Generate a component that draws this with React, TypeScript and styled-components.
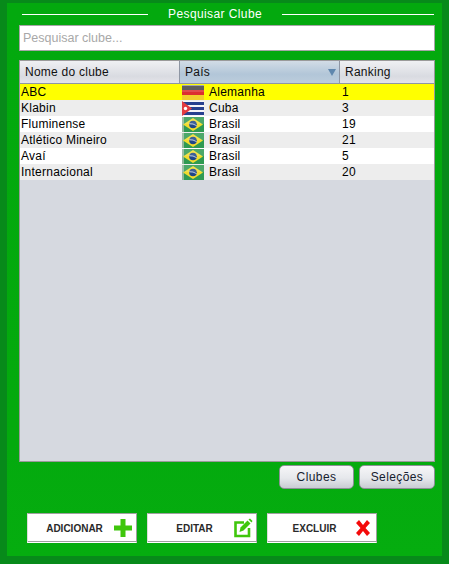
import styled, { createGlobalStyle } from "styled-components";

const GlobalStyle = createGlobalStyle`
  html, body {
    margin: 0;
    padding: 0;
    background: #078a1a;
  }
`;

const Frame = styled.div`
  width: 449px;
  height: 564px;
  box-sizing: border-box;
  padding: 3px 7px 8px 7px;
  background: #078a1a;
  font-family: "Liberation Sans", Arial, sans-serif;
  overflow: hidden;
`;

const Panel = styled.div`
  height: 553px;
  box-sizing: border-box;
  padding: 0 7px 0 12px;
  background: linear-gradient(#03a90e, #04aa0e 80%, #05ad0f);
  display: flex;
  flex-direction: column;
`;

const TitleRow = styled.div`
  height: 22px;
  display: flex;
  align-items: center;
  gap: 20px;
  padding: 0 1px 0 3px;
`;

const TitleLineLeft = styled.div`
  width: 126px;
  flex: none;
  height: 1px;
  background: #fff;
`;

const TitleLine = styled.div`
  flex: 1;
  height: 1px;
  background: #fff;
`;

const Title = styled.span`
  color: #fff;
  font-size: 12px;
  letter-spacing: 0.4px;
`;

const SearchInput = styled.input`
  height: 26px;
  box-sizing: border-box;
  margin-bottom: 9px;
  padding: 0 3px;
  border: 1px solid #a6a6a6;
  background: #fff;
  font-family: inherit;
  font-size: 12.5px;
  outline: none;
  &::placeholder {
    color: #a8a8a8;
    opacity: 1;
  }
`;

const Table = styled.div`
  height: 402px;
  box-sizing: border-box;
  border: 1px solid #9a9a9a;
  background: #d6d9e0;
`;

const columns = "160px 160px 1fr";

const HeaderRow = styled.div`
  display: grid;
  grid-template-columns: ${columns};
  height: 22px;
  border-bottom: 1px solid #8e96a4;
`;

const HeaderCell = styled.div<{ $sorted?: boolean }>`
  display: flex;
  align-items: center;
  justify-content: space-between;
  padding: 0 5px;
  border-right: 1px solid #8e96a4;
  font-size: 12px;
  color: #111;
  letter-spacing: 0.25px;
  background: ${(p) =>
    p.$sorted
      ? "linear-gradient(#d2dce6, #b2c6d8 60%, #bccddc)"
      : "linear-gradient(#eff0f3, #d9dbe1 70%, #e3e4e9)"};
  &:last-child {
    border-right: none;
  }
`;

const SortArrow = styled.svg`
  width: 8px;
  height: 8px;
  margin-right: -2px;
  fill: #5f87ad;
`;

const Row = styled.div<{ $bg: string }>`
  display: grid;
  grid-template-columns: ${columns};
  height: 16px;
  background: ${(p) => p.$bg};
  font-size: 12px;
  color: #000;
  letter-spacing: 0.25px;
`;

const Cell = styled.div`
  display: flex;
  align-items: center;
  gap: 5px;
  padding-left: 1px;
  white-space: nowrap;
`;

const FlagCell = styled(Cell)`
  padding-left: 2px;
`;

const RankCell = styled(Cell)`
  padding-left: 2px;
`;

const FlagBox = styled.svg`
  width: 22px;
  height: 15px;
  flex: none;
`;

const SwitchRow = styled.div`
  display: flex;
  justify-content: flex-end;
  gap: 5px;
  margin-top: 3px;
`;

const SwitchButton = styled.button<{ $width: number }>`
  width: ${(p) => p.$width}px;
  height: 24px;
  padding: 0;
  border: 1px solid #8d9097;
  border-radius: 5px;
  background: linear-gradient(#f6f6f8, #e6e8ec 55%, #c9ccd3);
  font-family: inherit;
  font-size: 12px;
  letter-spacing: 0.4px;
  color: #16202e;
`;

const ActionRow = styled.div`
  display: flex;
  gap: 10px;
  margin-top: 24px;
  padding-left: 8px;
`;

const ActionButton = styled.button`
  width: 110px;
  height: 30px;
  box-sizing: border-box;
  padding: 0 3px 0 8px;
  display: flex;
  align-items: center;
  border: none;
  border-top: 1px solid #a0a0a0;
  border-right: 1px solid #a0a0a0;
  border-left: 1px solid #dcdcdc;
  border-bottom: 1px solid #fff;
  box-shadow: inset 0 -1px 0 #a0a0a0;
  background: #fff;
  font-family: inherit;
`;

const ActionLabel = styled.span`
  flex: 1;
  text-align: center;
  font-size: 10px;
  font-weight: bold;
  color: #2a2a2a;
`;

const ActionIcon = styled.svg`
  width: 20px;
  height: 20px;
  flex: none;
`;

const Gloss = () => <rect width="22" height="7" fill="#fff" opacity="0.14" />;

const Germany = () => (
  <FlagBox viewBox="0 0 22 15">
    <rect width="22" height="5" fill="#444" />
    <rect y="5" width="22" height="5" fill="#dc2f30" />
    <rect y="10" width="22" height="5" fill="#f2cf2c" />
    <rect width="22" height="1" fill="#999" />
    <Gloss />
  </FlagBox>
);

const Cuba = () => (
  <FlagBox viewBox="0 0 22 15">
    <rect width="22" height="15" fill="#f4f4f8" />
    <rect y="1" width="22" height="3" fill="#26408f" />
    <rect y="6" width="22" height="3" fill="#26408f" />
    <rect y="11" width="22" height="3" fill="#26408f" />
    <path d="M0 0 L10 7.5 L0 15 Z" fill="#e23a40" />
    <circle cx="3.5" cy="7.5" r="1.7" fill="#fff" />
  </FlagBox>
);

const Brazil = () => (
  <FlagBox viewBox="0 0 22 15">
    <rect width="22" height="15" fill="#2f9a52" />
    <rect width="2" height="15" fill="#8fb79a" />
    <path d="M11 1 L21 7.5 L11 14 L1 7.5 Z" fill="#f2dc2e" />
    <circle cx="11" cy="7.5" r="3.8" fill="#1f4687" />
    <path d="M7.4 6.8 Q11 6.4 14.6 8.6" stroke="#e8eef4" strokeWidth="0.8" fill="none" />
    <Gloss />
  </FlagBox>
);

const flags = { de: Germany, cu: Cuba, br: Brazil };

const clubs: { name: string; flag: keyof typeof flags; country: string; ranking: number }[] = [
  { name: "ABC", flag: "de", country: "Alemanha", ranking: 1 },
  { name: "Klabin", flag: "cu", country: "Cuba", ranking: 3 },
  { name: "Fluminense", flag: "br", country: "Brasil", ranking: 19 },
  { name: "Atlético Mineiro", flag: "br", country: "Brasil", ranking: 21 },
  { name: "Avaí", flag: "br", country: "Brasil", ranking: 5 },
  { name: "Internacional", flag: "br", country: "Brasil", ranking: 20 },
];

const rowColor = (i: number) => {
  if (i === 0) return "#ffff00";
  return i % 2 === 1 ? "#ededed" : "#ffffff";
};

export default function App() {
  return (
    <Frame>
      <GlobalStyle />
      <Panel>
        <TitleRow>
          <TitleLineLeft />
          <Title>Pesquisar Clube</Title>
          <TitleLine />
        </TitleRow>
        <SearchInput placeholder="Pesquisar clube..." />
        <Table>
          <HeaderRow>
            <HeaderCell>Nome do clube</HeaderCell>
            <HeaderCell $sorted>
              País
              <SortArrow viewBox="0 0 8 8">
                <path d="M0 1 H8 L4 8 Z" />
              </SortArrow>
            </HeaderCell>
            <HeaderCell>Ranking</HeaderCell>
          </HeaderRow>
          {clubs.map((club, i) => {
            const Flag = flags[club.flag];
            return (
              <Row key={club.name} $bg={rowColor(i)}>
                <Cell>{club.name}</Cell>
                <FlagCell>
                  <Flag />
                  {club.country}
                </FlagCell>
                <RankCell>{club.ranking}</RankCell>
              </Row>
            );
          })}
        </Table>
        <SwitchRow>
          <SwitchButton $width={75}>Clubes</SwitchButton>
          <SwitchButton $width={76}>Seleções</SwitchButton>
        </SwitchRow>
        <ActionRow>
          <ActionButton>
            <ActionLabel>ADICIONAR</ActionLabel>
            <ActionIcon viewBox="0 0 20 20">
              <path d="M7.5 1 H12.5 V7.5 H19 V12.5 H12.5 V19 H7.5 V12.5 H1 V7.5 H7.5 Z" fill="#3fc60c" />
            </ActionIcon>
          </ActionButton>
          <ActionButton>
            <ActionLabel>EDITAR</ActionLabel>
            <ActionIcon viewBox="0 0 20 20">
              <path d="M11 4.5 H2.5 V18 H16 V10" fill="none" stroke="#3fc60c" strokeWidth="2.6" />
              <path d="M6.5 14 L7.5 9.5 L14.5 2.5 L17.5 5.5 L10.5 12.5 Z" fill="#3fc60c" />
              <path d="M15.5 1.5 L17 0.5 L19.5 3 L18.5 4.5 Z" fill="#3fc60c" />
            </ActionIcon>
          </ActionButton>
          <ActionButton>
            <ActionLabel>EXCLUIR</ActionLabel>
            <ActionIcon viewBox="0 0 20 20">
              <path d="M3 5 L6 2 L10 7 L14 2 L17 5 L12.5 10 L17 15 L14 18 L10 13 L6 18 L3 15 L7.5 10 Z" fill="#f40a0a" />
            </ActionIcon>
          </ActionButton>
        </ActionRow>
      </Panel>
    </Frame>
  );
}
